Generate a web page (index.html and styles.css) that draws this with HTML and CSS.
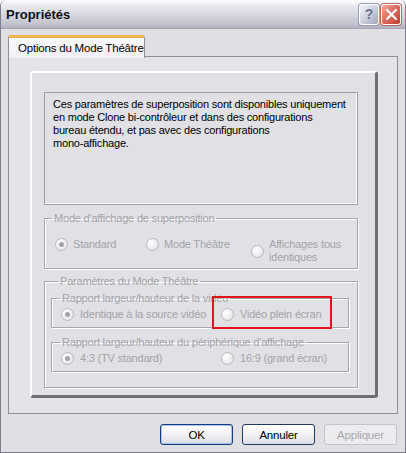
FILE: index.html
```html
<!DOCTYPE html>
<html lang="fr">
<head>
  <meta charset="UTF-8" />
  <title>Propriétés</title>
  <link rel="stylesheet" href="styles.css">
</head>
<body>

  <div class="window">
    <div class="titlebar">
      <span class="title">Propriétés</span>
      <div class="caption-btns">
        <span class="cap-btn help">?</span>
        <span class="cap-btn close">
          <svg width="13" height="13" viewBox="0 0 13 13">
            <path d="M2 2 L11 11 M11 2 L2 11" stroke="#fff" stroke-width="2.2" stroke-linecap="round"/>
          </svg>
        </span>
      </div>
    </div>

    <div class="content">
      <div class="tabs">
        <div class="tab">Options du Mode Théâtre</div>
      </div>

      <div class="panel">
        <div class="raised">
          <div class="note">
            Ces paramètres de superposition sont disponibles uniquement<br>
            en mode Clone bi-contrôleur et dans des configurations<br>
            bureau étendu, et pas avec des configurations<br>
            mono-affichage.
          </div>

          <fieldset class="group group-mode">
            <legend>Mode d'affichage de superposition</legend>
            <div class="row">
              <label class="opt w91"><span class="radio checked"></span>Standard</label>
              <label class="opt w105"><span class="radio"></span>Mode Théâtre</label>
              <label class="opt two-lines"><span class="radio"></span><span>Affichages tous<br>identiques</span></label>
            </div>
          </fieldset>

          <fieldset class="group group-theatre">
            <legend>Paramètres du Mode Théâtre</legend>

            <fieldset class="group sub">
              <legend>Rapport largeur/hauteur de la vidéo</legend>
              <div class="row sub-row">
                <label class="opt w160"><span class="radio checked"></span>Identique à la source vidéo</label>
                <label class="opt marked"><span class="radio"></span>Vidéo plein écran<span class="red-mark"></span></label>
              </div>
            </fieldset>

            <fieldset class="group sub sub-b">
              <legend>Rapport largeur/hauteur du périphérique d'affichage</legend>
              <div class="row sub-row">
                <label class="opt w160"><span class="radio checked"></span>4:3 (TV standard)</label>
                <label class="opt"><span class="radio"></span>16:9 (grand écran)</label>
              </div>
            </fieldset>
          </fieldset>
        </div>
      </div>

      <div class="buttons">
        <span class="btn default">OK</span>
        <span class="btn">Annuler</span>
        <span class="btn disabled">Appliquer</span>
      </div>
    </div>
  </div>

</body>
</html>
```

FILE: styles.css
```css
* {
  margin: 0;
  padding: 0;
  box-sizing: border-box;
}

body {
  font-family: "Liberation Sans", Arial, sans-serif;
  font-size: 11px;
  letter-spacing: -0.2px;
  background: #ffffff;
  color: #000;
}

.window {
  width: 406px;
  height: 453px;
  background: #e0dfe3;
  border: 1px solid #7d7d8e;
  border-top: none;
  border-radius: 6px 6px 0 0;
  display: flex;
  flex-direction: column;
  overflow: hidden;
}

.titlebar {
  height: 29px;
  display: flex;
  align-items: center;
  justify-content: space-between;
  padding: 0 4px 0 5px;
  background: linear-gradient(#fdfdfe 0%, #eaeaf0 18%, #d6d6e0 55%, #c3c3cf 85%, #b0b0c0 100%);
  border-bottom: 1px solid #a6a6b6;
}

.title {
  font-weight: bold;
  font-size: 13px;
  letter-spacing: 0;
  color: #111;
}

.caption-btns {
  display: flex;
  gap: 2px;
}

.cap-btn {
  width: 20px;
  height: 21px;
  border-radius: 3px;
  display: flex;
  align-items: center;
  justify-content: center;
}

.help {
  background: linear-gradient(135deg, #f4f5fa 0%, #c9cddc 55%, #9ea4bc 100%);
  border: 1px solid #ffffff;
  box-shadow: 0 0 0 1px #9a9eb2;
  color: #6b7390;
  font-weight: bold;
  font-size: 14px;
}

.close {
  background: linear-gradient(135deg, #f0a79c 0%, #dc6a5c 50%, #bf3b2e 100%);
  border: 1px solid #ffffff;
  box-shadow: 0 0 0 1px #b4675f;
}

.content {
  flex: 1;
  padding: 6px 7px 0 7px;
  display: flex;
  flex-direction: column;
}

.tabs {
  display: flex;
  position: relative;
  z-index: 1;
  margin-bottom: -2px;
}

.tab {
  width: 137px;
  height: 23px;
  padding: 4px 0 0 9px;
  background: linear-gradient(#fbfbfc, #f1f1f4);
  border: 1px solid #8f8f98;
  border-bottom: none;
  border-top: 3px solid #f2b24a;
  border-radius: 3px 3px 0 0;
  font-size: 11.5px;
  white-space: nowrap;
}

.panel {
  height: 358px;
  background: #e4e4e8;
  border: 1px solid #8f8f98;
  padding: 14px 19px 15px 21px;
  display: flex;
}

.raised {
  flex: 1;
  background: #e1e1e5;
  border-style: solid;
  border-width: 2px 3px 3px 2px;
  border-color: #ffffff #6e6e76 #6e6e76 #ffffff;
  border-radius: 3px;
  padding: 19px 17px 0 12px;
}

.note {
  height: 113px;
  border: 1px solid #9d9da3;
  box-shadow: inset -1px -1px 0 #ffffff;
  padding: 5px 8px;
  line-height: 13px;
  margin-bottom: 7px;
  white-space: nowrap;
}

.group {
  border: 1px solid #a6a6ab;
  box-shadow: inset 1px 1px 0 #ffffff, 1px 1px 0 #ffffff;
  color: #a3a3a8;
}

.group legend {
  margin-left: 7px;
  padding: 0 2px;
  line-height: 13px;
  white-space: nowrap;
}

.group-mode {
  height: 57px;
  margin-bottom: 6px;
}

.row {
  display: flex;
  align-items: flex-start;
  padding-left: 10px;
  margin-top: 13px;
  line-height: 13px;
  white-space: nowrap;
}

.opt {
  display: flex;
  align-items: center;
  gap: 5px;
  position: relative;
}

.w91 { width: 91px; }
.w105 { width: 105px; }
.w160 { width: 160px; }

.radio {
  width: 13px;
  height: 13px;
  border-radius: 50%;
  border: 1px solid #b9b9be;
  background: radial-gradient(circle at 35% 35%, #ffffff 0%, #ececef 60%, #d6d6da 100%);
  display: flex;
  align-items: center;
  justify-content: center;
  flex-shrink: 0;
}

.radio.checked::after {
  content: "";
  width: 5px;
  height: 5px;
  border-radius: 50%;
  background: #a2a2a8;
}

.group-theatre {
  height: 113px;
  padding: 0 8px 0 6px;
}

.sub {
  height: 36px;
  margin-top: 4px;
}

.sub legend {
  margin-left: 8px;
}

.sub-b {
  margin-top: 8px;
}

.sub-row {
  margin-top: 3px;
  padding-left: 9px;
}

.sub-row .opt {
  gap: 6px;
}

.red-mark {
  position: absolute;
  left: -9px;
  top: -12px;
  width: 120px;
  height: 33px;
  border: 2px solid #e4121c;
}

.buttons {
  display: flex;
  justify-content: flex-end;
  gap: 9px;
  padding: 10px 1px 0 0;
}

.btn {
  width: 73px;
  height: 21px;
  border: 1px solid #1f3b63;
  border-radius: 3px;
  background: linear-gradient(#ffffff 0%, #f2f2f6 50%, #dcdce4 100%);
  display: flex;
  align-items: center;
  justify-content: center;
  font-size: 11.5px;
}

.btn.default {
  border-color: #173d80;
  box-shadow: inset 0 0 0 1px #a9c3ef;
}

.btn.disabled {
  border-color: #c4c4ca;
  background: #ececef;
  color: #a8a8ad;
}
```
